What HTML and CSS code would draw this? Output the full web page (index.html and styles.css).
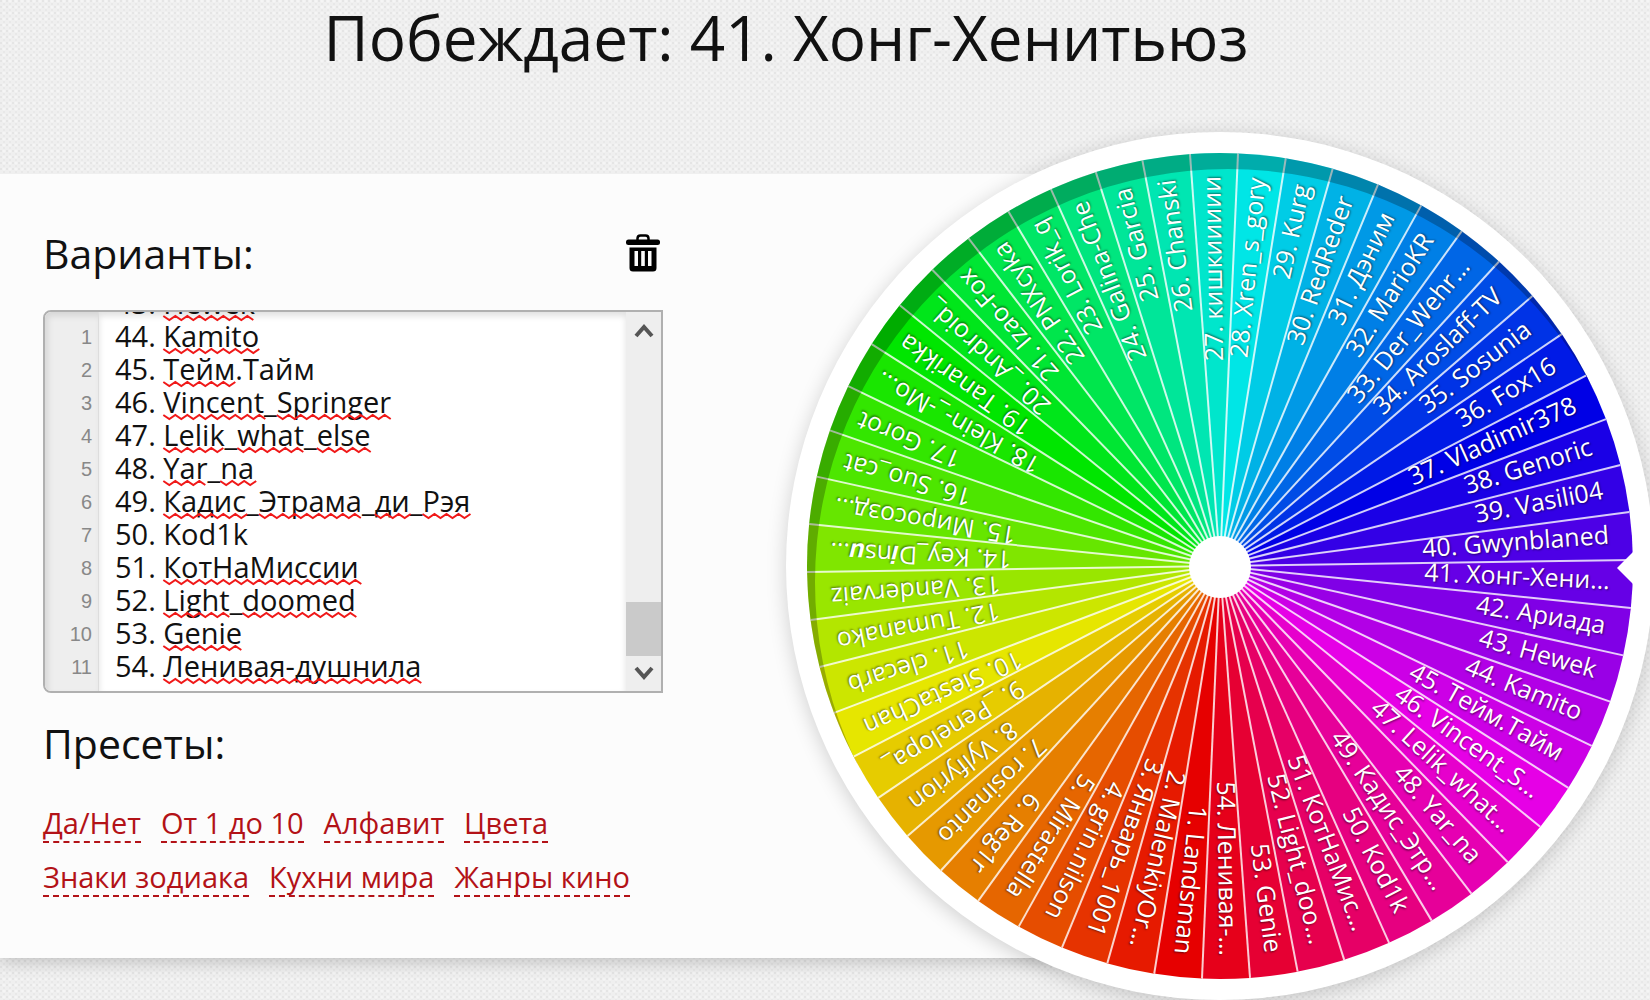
FILE: index.html
```html
<!DOCTYPE html>
<html lang="ru">
<head>
<meta charset="utf-8">
<meta name="viewport" content="width=device-width, initial-scale=1">
<title>Колесо фортуны</title>
<link rel="stylesheet" href="styles.css">
</head>
<body>
<header class="header">
  <h1 class="winner">Побеждает: 41. Хонг-Хенитьюз</h1>
</header>
<main class="stage">
  <section class="sheet">
    <div class="controls">
      <div class="controls-head">
        <label class="title" for="options">Варианты:</label>
        <button class="clear" type="button" aria-label="Очистить">
          <svg width="34" height="38" viewBox="0 0 34 38" aria-hidden="true">
            <path d="M11.500 6V4.500Q11.500 1.500 14.500 1.500H19.500Q22.500 1.500 22.500 4.500V6" fill="none" stroke="#000" stroke-width="2.500"/>
            <rect x="0" y="5.500" width="34" height="5.500" rx="2.500"/>
            <path fill-rule="evenodd" d="M3.500 13.500H30.500V34Q30.500 37.500 27 37.500H7Q3.500 37.500 3.500 34ZM8.500 17V32H12V17ZM15.200 17V32H18.800V17ZM22 17V32H25.500V17Z"/>
          </svg>
        </button>
      </div>
      <div class="editor">
        <ol class="gutter" aria-hidden="true">
          <li>1</li><li>2</li><li>3</li><li>4</li><li>5</li><li>6</li><li>7</li><li>8</li><li>9</li><li>10</li><li>11</li>
        </ol>
        <div class="field">
          <textarea id="options" class="options" wrap="off" spellcheck="false"></textarea>
          <svg class="marks" id="marks" aria-hidden="true"></svg>
        </div>
        <div class="scroller">
          <button class="scroll-step" id="up" type="button" aria-label="Вверх">
            <svg width="20" height="16" aria-hidden="true"><path d="M2 14L10 5L18 14"/></svg>
          </button>
          <div class="track"><div class="thumb" id="thumb"></div></div>
          <button class="scroll-step" id="down" type="button" aria-label="Вниз">
            <svg width="20" height="16" aria-hidden="true"><path d="M2 2L10 11L18 2"/></svg>
          </button>
        </div>
      </div>
      <h2 class="title">Пресеты:</h2>
      <nav class="presets">
        <a href="#yesno">Да/Нет</a>
        <a href="#ten">От 1 до 10</a>
        <a href="#alphabet">Алфавит</a>
        <a href="#colors">Цвета</a>
        <a href="#zodiac">Знаки зодиака</a>
        <a href="#kitchen">Кухни мира</a>
        <a href="#genres">Жанры кино</a>
      </nav>
    </div>
  </section>
  <div class="wheel">
    <svg class="wheel-face" id="wheel" viewBox="-434 -434 868 868" role="img" aria-label="Колесо"></svg>
  </div>
</main>
<script src="app.js"></script>
</body>
</html>
```
FILE: styles.css
```css
* { box-sizing: border-box; }

body {
  margin: 0;
  overflow-x: hidden;
  font-family: "Open Sans", "Noto Sans", sans-serif;
  font-size: 29px;
  color: #111;
  background-color: #efefef;
  background-image:
    radial-gradient(circle at 1px 1px, rgba(0, 0, 0, .14) 0, transparent 1px),
    radial-gradient(circle at 4px 4px, rgba(0, 0, 0, .1) 0, transparent 1px),
    radial-gradient(circle at 4px 1px, rgba(255, 255, 255, .6) 0, transparent 2px);
  background-size: 6px 6px;
}

.header {
  height: 132px;
  padding-right: 78px;
}

.winner {
  margin: 0;
  font-size: 62px;
  font-weight: 400;
  line-height: 74px;
  text-align: center;
}

.stage {
  display: grid;
  grid-template-columns: minmax(0, 1fr) 868px;
  margin-right: -4px;
}

.sheet {
  grid-area: 1 / 1 / 2 / 3;
  align-self: center;
  margin-right: 434px;
  padding: 51px 43px 61px;
  background: #fcfcfc;
  box-shadow: 0 4px 16px rgba(0, 0, 0, .2);
  clip-path: inset(0 0 -30px 0);
}

.controls { max-width: 620px; }

.controls-head {
  display: flex;
  align-items: center;
  justify-content: space-between;
  padding-right: 3px;
}

.title {
  margin: 0;
  font-size: 41px;
  font-weight: 400;
  line-height: 56px;
}

.clear {
  display: block;
  padding: 0;
  border: 0;
  background: none;
  line-height: 0;
}

.editor {
  display: flex;
  height: 383px;
  margin: 29px 0 22px;
  border: 2px solid #b0b0b0;
  border-radius: 8px 0 0 8px;
  background: #fff;
  overflow: hidden;
}

.gutter {
  flex: none;
  width: 54px;
  margin: 0;
  padding: 9px 6px 0 0;
  list-style: none;
  text-align: right;
  font: 20px/33px "Liberation Sans", sans-serif;
  color: #888;
  background: #eee;
  border-right: 1px solid #ddd;
  box-shadow: inset 3px 4px 6px rgba(0, 0, 0, .1);
}

.field {
  position: relative;
  flex: 1;
  min-width: 0;
}

.options {
  display: block;
  width: 100%;
  height: 100%;
  margin: 0;
  padding: 8px 0 9px 16px;
  border: 0;
  outline: 0;
  resize: none;
  overflow-x: hidden;
  overflow-y: scroll;
  scrollbar-width: none;
  font: inherit;
  line-height: 33px;
  color: #111;
  background: none;
  box-shadow: inset 0 4px 6px rgba(0, 0, 0, .12);
}

.marks {
  position: absolute;
  inset: 0;
  width: 100%;
  height: 100%;
  pointer-events: none;
  fill: none;
  stroke: #f01818;
  stroke-width: 2;
}

.scroller {
  display: flex;
  flex-direction: column;
  width: 35px;
  background: #eee;
}

.scroll-step {
  display: grid;
  place-items: center;
  height: 35px;
  padding: 0;
  border: 0;
  background: none;
}

.scroll-step path {
  fill: none;
  stroke: #555;
  stroke-width: 4;
}

.track {
  display: flex;
  flex: 1;
  flex-direction: column;
  justify-content: flex-end;
}

.thumb {
  height: 54px;
  background: #cacaca;
}

.presets {
  display: flex;
  flex-wrap: wrap;
  gap: 16px 20px;
  margin-top: 34px;
}

.presets a {
  color: #b31217;
  line-height: 36px;
  text-decoration: none;
  border-bottom: 2px dashed #b31217;
}

.wheel {
  grid-area: 1 / 2 / 2 / 3;
  position: relative;
  height: 868px;
  border-radius: 50%;
  background: #fff;
  box-shadow: 0 4px 20px rgba(0, 0, 0, .18);
}

.wheel-face { display: block; width: 868px; height: 868px; }

.spoke { stroke: #fff; stroke-opacity: .8; stroke-width: 2; }
.rim { fill: #000; fill-opacity: .25; fill-rule: evenodd; }
.white { fill: #fff; }

.label {
  font-size: 25px;
  fill: #fff;
  text-anchor: end;
  text-shadow: 1px 1px 2px rgba(0, 0, 0, .5);
}
```
FILE: app.js
```js
const names = [
  "Landsman", "MalenkiyOr…", "Январь_1001", "grin.nilson", "Mirastella", "Reg1r",
  "rosinanto", "Vylfyrion", "_Penelopa_", "SiestaChan", "clecarb", "Tumanako",
  "Vandervaiz", "Key_D𝒊ns𝒖…", "Миросозд…", "Suo_cat", "Gorot", "Klein-_-Mo…",
  "Tanarikka", "_Android_", "Izao-Fox", "PNXcyka", "Lorik_q", "Galina-Che",
  "Garcia", "Chanski", "кишкиииии", "Xren_s_gory", "Kurg", "RedReder",
  "Дэним", "MarioKR", "Der_Wehr…", "Aroslaff-TV", "Sosunia", "Fox16",
  "Vladimir378", "Genoric", "Vasili04", "Gwynblaned", "Хонг-Хени…", "Ариада",
  "Hewek", "Kamito", "Тейм.Тайм", "Vincent_S…", "Lelik_what…", "Yar_na",
  "Кадис_Этр…", "Kod1k", "КотНаМис…", "Light_doo…", "Genie", "Ленивая-…"
];

const fullNames = {
  41: "Хонг-Хенитьюз", 46: "Vincent_Springer", 47: "Lelik_what_else",
  49: "Кадис_Этрама_ди_Рэя", 51: "КотНаМиссии", 52: "Light_doomed", 54: "Ленивая-душнила"
};

const ns = "http://www.w3.org/2000/svg";
function add(parent, tag, attrs, text) {
  const el = document.createElementNS(ns, tag);
  for (const key in attrs) el.setAttribute(key, attrs[key]);
  if (text) el.textContent = text;
  parent.appendChild(el);
  return el;
}

/* Wheel: one sector per option, clockwise */
const wheel = document.getElementById("wheel");
const R = 413;
const step = 360 / names.length;
const start = 92.5;
const at = (deg, r) => {
  const a = deg * Math.PI / 180;
  return (Math.cos(a) * r).toFixed(2) + " " + (Math.sin(a) * r).toFixed(2);
};
names.forEach((name, i) => {
  const a = start + i * step;
  add(wheel, "path", {
    d: `M0 0L${at(a, R)}A${R} ${R} 0 0 1 ${at(a + step + .1, R)}Z`,
    fill: `hsl(${i * step} 100% 45%)`
  });
});
const full = (x, y, r) => `M${x - r} ${y}a${r} ${r} 0 1 0 ${2 * r} 0a${r} ${r} 0 1 0 ${-2 * r} 0Z`;
const defs = add(wheel, "defs", {});
add(add(defs, "clipPath", { id: "disc" }), "circle", { r: R });
names.forEach((name, i) => {
  const [x, y] = at(start + i * step, R).split(" ");
  add(wheel, "line", { class: "spoke", x1: 0, y1: 0, x2: x, y2: y });
});
add(wheel, "path", { class: "rim", d: full(0, 0, 450) + full(8, 16, R), "clip-path": "url(#disc)" });
names.forEach((name, i) => {
  add(wheel, "text", {
    class: "label", x: 390, y: 6,
    transform: `rotate(${(start + (i + .5) * step).toFixed(2)})`
  }, `${i + 1}. ${name}`);
});
add(wheel, "circle", { class: "white", cy: 1, r: 31 });
add(wheel, "path", { class: "white", d: "M416 -17L397 2L416 21Z" });

/* Option list, scrolled to its end */
const area = document.getElementById("options");
const lines = names.map((name, i) => `${i + 1}. ${fullNames[i + 1] || name}`);
area.value = lines.join("\n");
area.scrollTop = area.scrollHeight;
document.getElementById("up").onclick = () => { area.scrollTop -= 33; };
document.getElementById("down").onclick = () => { area.scrollTop += 33; };

/* Wavy marks under unknown words */
const known = new Set(["Тайм", "Kod1k"]);
const marks = document.getElementById("marks");
const thumb = document.getElementById("thumb");
const pen = document.createElement("canvas").getContext("2d");
pen.font = '29px "Open Sans", "Noto Sans", sans-serif';
function refresh() {
  const rest = area.scrollHeight - area.clientHeight - area.scrollTop;
  thumb.style.marginBottom = Math.max(0, rest) / area.scrollHeight * thumb.parentNode.clientHeight + "px";
  marks.replaceChildren();
  lines.forEach((line, i) => {
    const y = 8 + i * 33 + 30 - area.scrollTop;
    if (y < 0 || y > area.clientHeight) return;
    for (const m of line.matchAll(/[A-Za-zА-Яа-яё0-9-]{2,}/g)) {
      if (known.has(m[0]) || /^\d+$/.test(m[0])) continue;
      const x0 = 16 + pen.measureText(line.slice(0, m.index)).width;
      const x1 = x0 + pen.measureText(m[0]).width;
      let d = `M${x0} ${y}`;
      for (let x = x0 + 6, up = false; x <= x1 + 3; x += 6, up = !up) d += `L${x} ${up ? y : y + 4}`;
      add(marks, "path", { d });
    }
  });
}
refresh();
area.addEventListener("scroll", refresh);
```
